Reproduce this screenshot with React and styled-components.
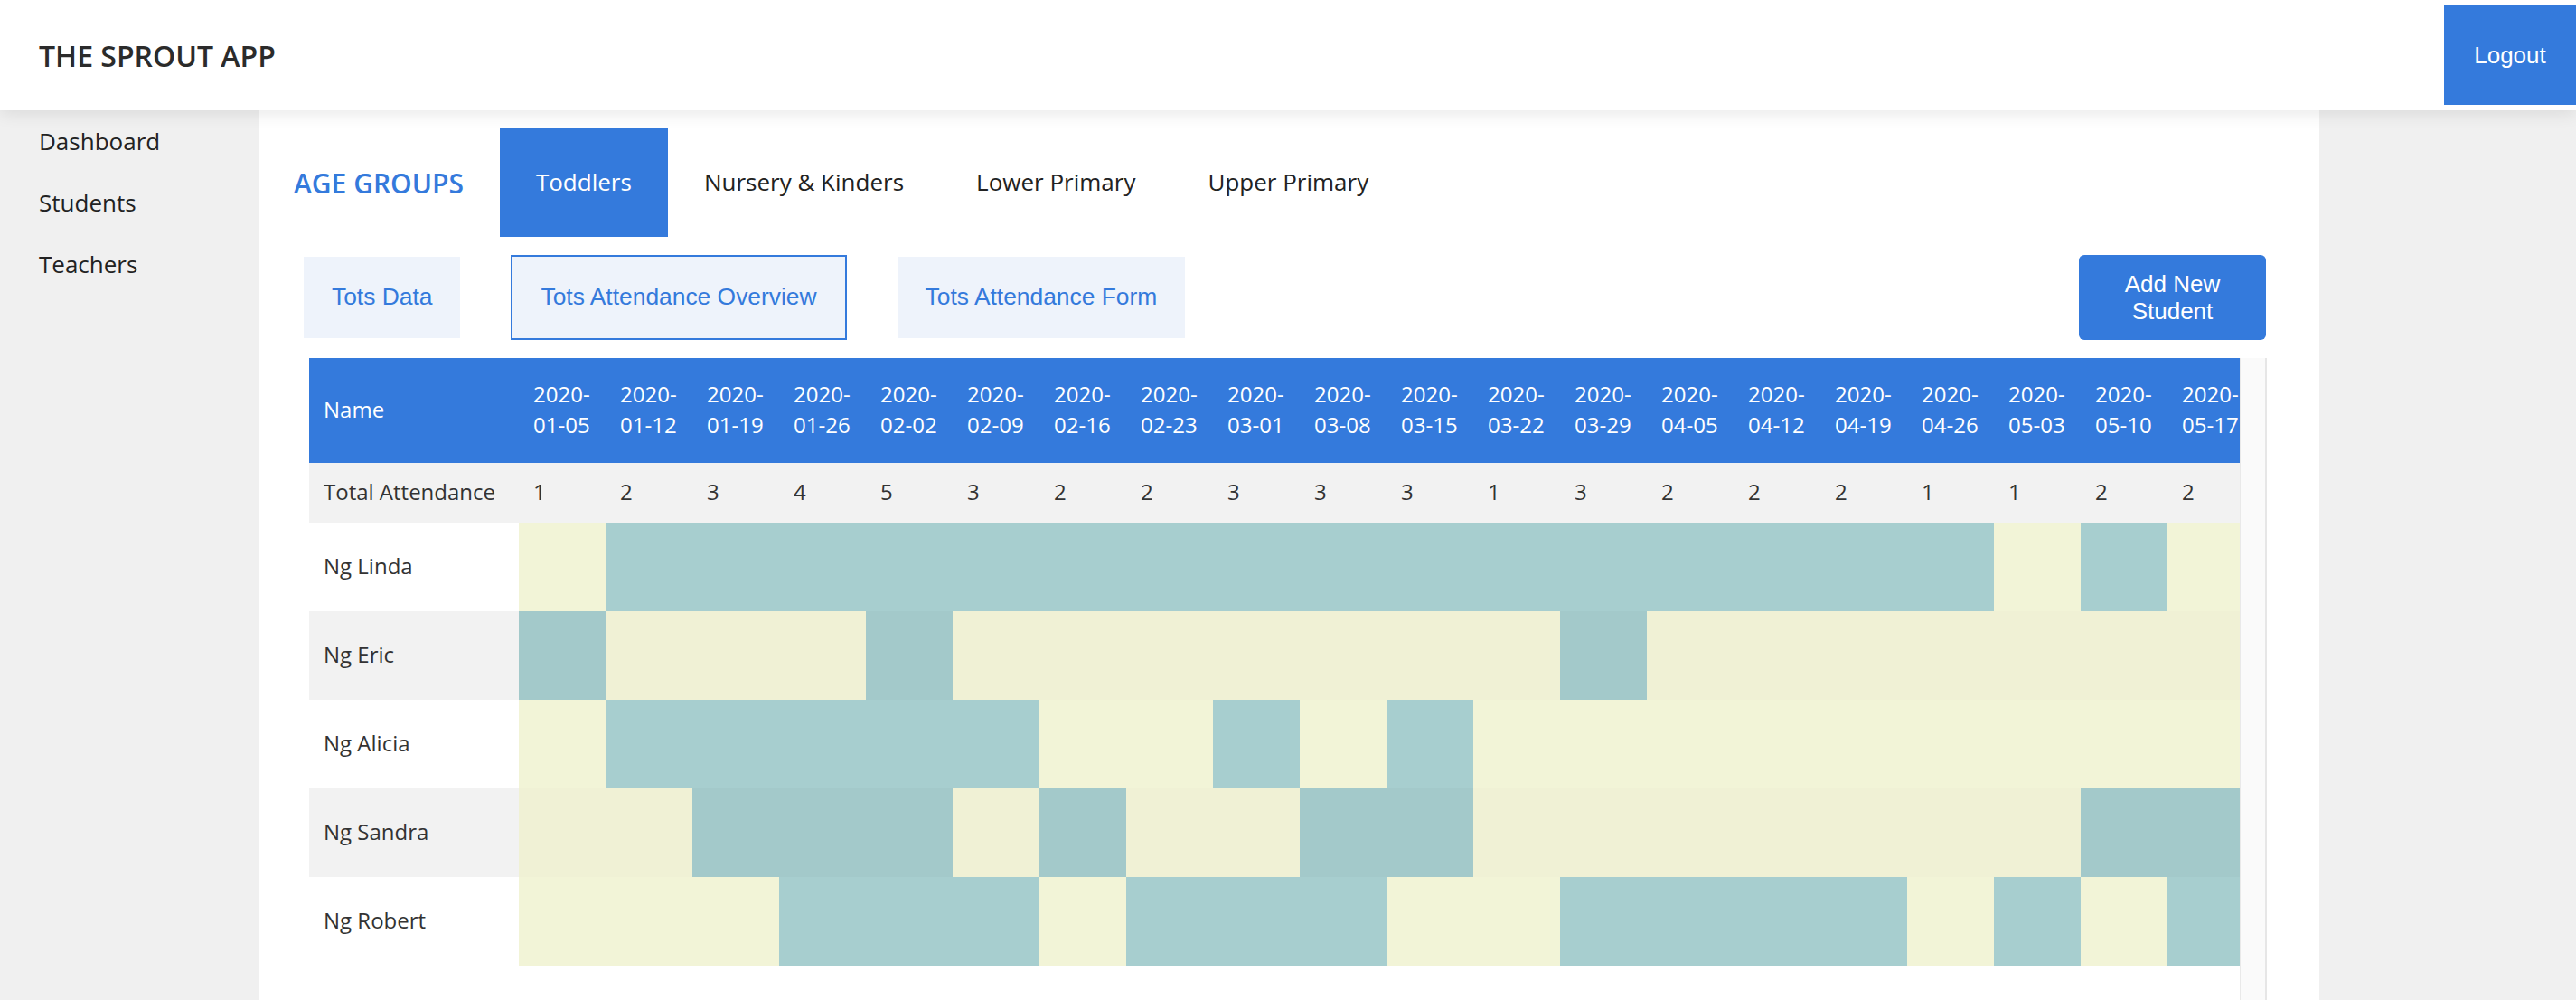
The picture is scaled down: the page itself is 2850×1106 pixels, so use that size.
import React from "react";
import styled, { createGlobalStyle } from "styled-components";

const GlobalStyle = createGlobalStyle`
  html, body {
    margin: 0;
    padding: 0;
    overflow: hidden;
    background: #f0f0f0;
    font-family: "Open Sans", "Noto Sans", sans-serif;
    color: #222;
  }
  * { box-sizing: border-box; }
`;

const BLUE = "#347adc";

const Header = styled.header`
  position: relative;
  z-index: 2;
  height: 122px;
  display: flex;
  align-items: center;
  justify-content: space-between;
  padding-left: 43px;
  background: #fff;
  box-shadow: 0 4px 18px rgba(0, 0, 0, 0.09);
`;

const Brand = styled.h1`
  margin: 0;
  font-size: 32px;
  font-weight: 600;
  color: #2b2b2b;
`;

const LogoutButton = styled.button`
  width: 146px;
  height: 110px;
  border: none;
  background: ${BLUE};
  color: #fff;
  font-family: "Liberation Sans", Arial, sans-serif;
  font-size: 26px;
  cursor: pointer;
`;

const Body = styled.div`
  display: flex;
  align-items: flex-start;
`;

const Sidebar = styled.nav`
  width: 286px;
  flex-shrink: 0;
  padding: 16px 0 0 43px;
`;

const NavItem = styled.div`
  height: 68px;
  font-size: 26px;
  line-height: 36px;
  color: #222;
`;

const Card = styled.main`
  width: 2280px;
  flex-shrink: 0;
  background: #fff;
  padding-top: 20px;
`;

const TabRow = styled.div`
  display: flex;
  align-items: center;
  height: 120px;
`;

const GroupLabel = styled.div`
  padding: 0 40px 0 39px;
  font-size: 30px;
  font-weight: 600;
  color: ${BLUE};
`;

const Tab = styled.div`
  height: 120px;
  display: flex;
  align-items: center;
  padding: 0 40px 3px;
  font-size: 26px;
  background: ${(p) => (p.$active ? BLUE : "transparent")};
  color: ${(p) => (p.$active ? "#fff" : "#222")};
`;

const SubRow = styled.div`
  display: flex;
  align-items: center;
  height: 94px;
  margin: 20px 59px 0 50px;
`;

const SubTab = styled.div`
  height: 90px;
  display: flex;
  align-items: center;
  padding: 0 31px 2px;
  margin-right: 58px;
  background: #eef3fb;
  color: ${BLUE};
  font-family: "Liberation Sans", Arial, sans-serif;
  font-size: 26.4px;
  outline: ${(p) => (p.$active ? `2px solid ${BLUE}` : "none")};
`;

const AddButton = styled.button`
  margin-left: auto;
  width: 207px;
  height: 94px;
  padding: 0 30px;
  border: none;
  border-radius: 6px;
  background: ${BLUE};
  color: #fff;
  font-family: "Liberation Sans", Arial, sans-serif;
  font-size: 26px;
  line-height: 30px;
`;

const TableFrame = styled.div`
  display: flex;
  margin: 20px 58px 0 56px;
  height: 820px;
`;

const TableViewport = styled.div`
  flex: 1;
  min-width: 0;
  overflow: hidden;
`;

const ScrollTrack = styled.div`
  width: 30px;
  flex-shrink: 0;
  background: #fafafa;
  border-left: 1px solid #e9e9e9;
  border-right: 2px solid #e6e6e6;
`;

const Table = styled.table`
  table-layout: fixed;
  border-collapse: collapse;
  border-spacing: 0;
  width: ${(p) => p.$width}px;
  font-size: 24px;
  line-height: 34px;
  color: #333;
`;

const HeadCell = styled.th`
  width: ${(p) => p.$w}px;
  padding: 23px 16px 25px;
  background: ${BLUE};
  color: #fff;
  font-weight: 400;
  text-align: left;
  vertical-align: middle;
`;

const Row = styled.tr`
  background: ${(p) => (p.$stripe ? "#f2f2f2" : "#fff")};
`;

const NameCell = styled.td`
  padding: ${(p) => (p.$total ? "15px 16px 17px" : "31px 16px 33px")};
  white-space: nowrap;
`;

const CountCell = styled.td`
  padding: 15px 16px 17px;
`;

const MarkCell = styled.td`
  padding: 0;
  height: 98px;
  background: ${(p) =>
    p.$present
      ? p.$stripe
        ? "#a3c9ca"
        : "#a7cecf"
      : p.$stripe
      ? "#f0f1d5"
      : "#f2f4d7"};
`;

const dates = [
  "2020-01-05", "2020-01-12", "2020-01-19", "2020-01-26", "2020-02-02",
  "2020-02-09", "2020-02-16", "2020-02-23", "2020-03-01", "2020-03-08",
  "2020-03-15", "2020-03-22", "2020-03-29", "2020-04-05", "2020-04-12",
  "2020-04-19", "2020-04-26", "2020-05-03", "2020-05-10", "2020-05-17",
];

const students = [
  { name: "Ng Linda", marks: "01111111111111111010" },
  { name: "Ng Eric", marks: "10001000000010000000" },
  { name: "Ng Alicia", marks: "01111100101000000000" },
  { name: "Ng Sandra", marks: "00111010011000000011" },
  { name: "Ng Robert", marks: "00011101110011110101" },
];

const NAME_W = 232;
const DATE_W = 96;

const totals = dates.map((_, i) =>
  students.reduce((n, s) => n + (s.marks[i] === "1" ? 1 : 0), 0)
);

const AttendanceTable = () => (
  <TableFrame>
    <TableViewport>
      <Table $width={NAME_W + dates.length * DATE_W}>
        <thead>
          <tr>
            <HeadCell $w={NAME_W}>Name</HeadCell>
            {dates.map((d) => (
              <HeadCell key={d} $w={DATE_W}>
                {d}
              </HeadCell>
            ))}
          </tr>
        </thead>
        <tbody>
          <Row $stripe>
            <NameCell $total>Total Attendance</NameCell>
            {totals.map((t, i) => (
              <CountCell key={i}>{t}</CountCell>
            ))}
          </Row>
          {students.map((s, r) => {
            const stripe = r % 2 === 1;
            return (
              <Row key={s.name} $stripe={stripe}>
                <NameCell>{s.name}</NameCell>
                {s.marks.split("").map((m, i) => (
                  <MarkCell key={i} $present={m === "1"} $stripe={stripe} />
                ))}
              </Row>
            );
          })}
        </tbody>
      </Table>
    </TableViewport>
    <ScrollTrack />
  </TableFrame>
);

export default function App() {
  return (
    <>
      <GlobalStyle />
      <Header>
        <Brand>THE SPROUT APP</Brand>
        <LogoutButton>Logout</LogoutButton>
      </Header>
      <Body>
        <Sidebar>
          <NavItem>Dashboard</NavItem>
          <NavItem>Students</NavItem>
          <NavItem>Teachers</NavItem>
        </Sidebar>
        <Card>
          <TabRow>
            <GroupLabel>AGE GROUPS</GroupLabel>
            <Tab $active>Toddlers</Tab>
            <Tab>Nursery &amp; Kinders</Tab>
            <Tab>Lower Primary</Tab>
            <Tab>Upper Primary</Tab>
          </TabRow>
          <SubRow>
            <SubTab>Tots Data</SubTab>
            <SubTab $active>Tots Attendance Overview</SubTab>
            <SubTab>Tots Attendance Form</SubTab>
            <AddButton>Add New Student</AddButton>
          </SubRow>
          <AttendanceTable />
        </Card>
      </Body>
    </>
  );
}
